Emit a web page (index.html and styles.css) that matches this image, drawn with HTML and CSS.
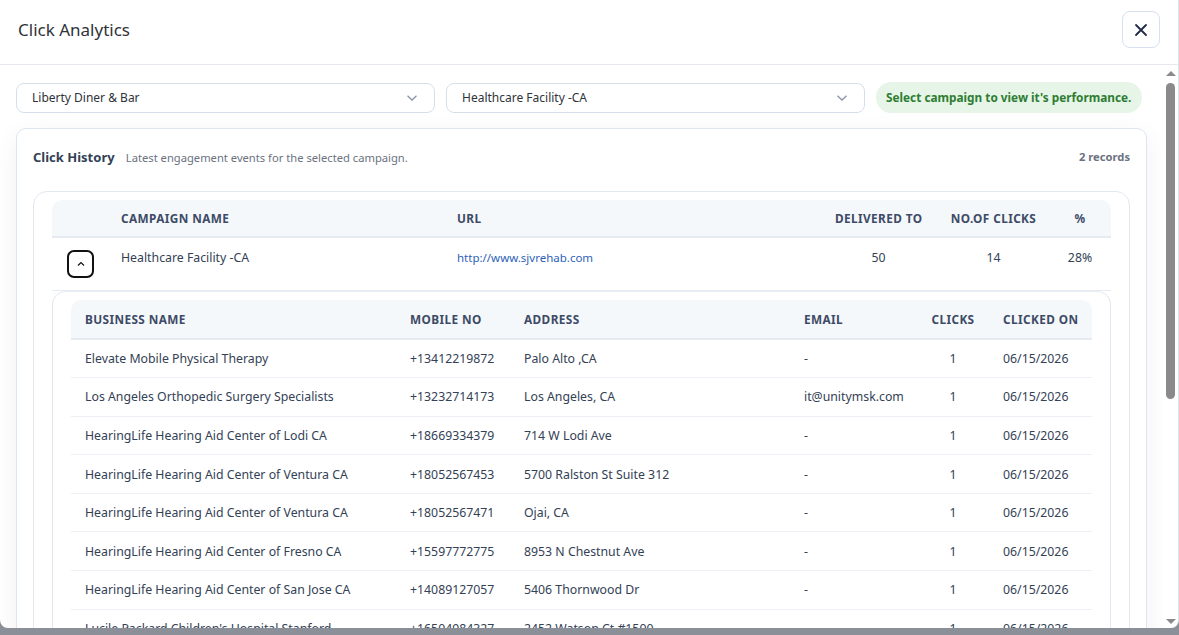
FILE: index.html
```html
<!DOCTYPE html>
<html lang="en">
<head>
    <meta charset="UTF-8">
    <meta name="viewport" content="width=device-width, initial-scale=1.0">
    <title>Click Analytics</title>
    <link rel="stylesheet" href="styles.css">
</head>
<body>
    <div class="modal">
        <div class="modal-header">
            <h2>Click Analytics</h2>
            <button type="button" class="close-btn" aria-label="Close">
                <svg width="14" height="14" viewBox="0 0 14 14"><path d="M2 2L12 12M12 2L2 12" stroke="#1f2a44" stroke-width="1.8" stroke-linecap="round"/></svg>
            </button>
        </div>
        <div class="modal-body">
            <div class="scroll-content">
                <div class="filters">
                    <div class="fake-select">
                        <span>Liberty Diner &amp; Bar</span>
                        <svg width="12" height="8" viewBox="0 0 12 8"><path d="M1.5 1.8L6 6L10.5 1.8" fill="none" stroke="#8a94a6" stroke-width="1.3"/></svg>
                    </div>
                    <div class="fake-select">
                        <span>Healthcare Facility -CA</span>
                        <svg width="12" height="8" viewBox="0 0 12 8"><path d="M1.5 1.8L6 6L10.5 1.8" fill="none" stroke="#8a94a6" stroke-width="1.3"/></svg>
                    </div>
                    <div class="hint-pill">Select campaign to view it's performance.</div>
                </div>

                <div class="history-card">
                    <div class="history-head">
                        <div class="history-title">
                            <strong>Click History</strong>
                            <span>Latest engagement events for the selected campaign.</span>
                        </div>
                        <div class="record-count">2 records</div>
                    </div>

                    <div class="table-wrap">
                        <table class="campaign-table">
                            <colgroup>
                                <col style="width:58px"><col style="width:336px"><col style="width:378px">
                                <col style="width:109px"><col style="width:121px"><col style="width:57px">
                            </colgroup>
                            <thead>
                                <tr>
                                    <th></th>
                                    <th>Campaign Name</th>
                                    <th>URL</th>
                                    <th class="center">Delivered To</th>
                                    <th class="center">No.of Clicks</th>
                                    <th class="center pct">%</th>
                                </tr>
                            </thead>
                            <tbody>
                                <tr class="campaign-row">
                                    <td><button type="button" class="toggle-btn"><svg width="10" height="6" viewBox="0 0 10 6"><path d="M2 4.5L5 1.6L8 4.5" fill="none" stroke="#111" stroke-width="1.2"/></svg></button></td>
                                    <td>Healthcare Facility -CA</td>
                                    <td><a href="#" class="url">http://www.sjvrehab.com</a></td>
                                    <td class="center">50</td>
                                    <td class="center">14</td>
                                    <td class="center pct">28%</td>
                                </tr>
                                <tr class="detail-row">
                                    <td colspan="6">
                                        <div class="table-wrap inner">
                                            <table class="clicks-table">
                                                <colgroup>
                                                    <col style="width:325px"><col style="width:114px"><col style="width:280px">
                                                    <col style="width:127px"><col style="width:72px"><col style="width:103px">
                                                </colgroup>
                                                <thead>
                                                    <tr>
                                                        <th>Business Name</th>
                                                        <th>Mobile No</th>
                                                        <th>Address</th>
                                                        <th>Email</th>
                                                        <th class="center">Clicks</th>
                                                        <th>Clicked On</th>
                                                    </tr>
                                                </thead>
                                                <tbody>
                                                    <tr><td>Elevate Mobile Physical Therapy</td><td>+13412219872</td><td>Palo Alto ,CA</td><td>-</td><td class="center">1</td><td>06/15/2026</td></tr>
                                                    <tr><td>Los Angeles Orthopedic Surgery Specialists</td><td>+13232714173</td><td>Los Angeles, CA</td><td>it@unitymsk.com</td><td class="center">1</td><td>06/15/2026</td></tr>
                                                    <tr><td>HearingLife Hearing Aid Center of Lodi CA</td><td>+18669334379</td><td>714 W Lodi Ave</td><td>-</td><td class="center">1</td><td>06/15/2026</td></tr>
                                                    <tr><td>HearingLife Hearing Aid Center of Ventura CA</td><td>+18052567453</td><td>5700 Ralston St Suite 312</td><td>-</td><td class="center">1</td><td>06/15/2026</td></tr>
                                                    <tr><td>HearingLife Hearing Aid Center of Ventura CA</td><td>+18052567471</td><td>Ojai, CA</td><td>-</td><td class="center">1</td><td>06/15/2026</td></tr>
                                                    <tr><td>HearingLife Hearing Aid Center of Fresno CA</td><td>+15597772775</td><td>8953 N Chestnut Ave</td><td>-</td><td class="center">1</td><td>06/15/2026</td></tr>
                                                    <tr><td>HearingLife Hearing Aid Center of San Jose CA</td><td>+14089127057</td><td>5406 Thornwood Dr</td><td>-</td><td class="center">1</td><td>06/15/2026</td></tr>
                                                    <tr><td>Lucile Packard Children's Hospital Stanford</td><td>+16504984327</td><td>2452 Watson Ct #1500</td><td>-</td><td class="center">1</td><td>06/15/2026</td></tr>
                                                    <tr><td>Valley Children's Healthcare</td><td>+15593532000</td><td>9300 Valley Children's Pl</td><td>-</td><td class="center">1</td><td>06/15/2026</td></tr>
                                                    <tr><td>San Joaquin Valley Rehabilitation Hospital</td><td>+15594366000</td><td>7173 N Sharon Ave</td><td>-</td><td class="center">1</td><td>06/15/2026</td></tr>
                                                    <tr><td>Sutter Health Physical Therapy</td><td>+19163863000</td><td>Sacramento, CA</td><td>-</td><td class="center">1</td><td>06/15/2026</td></tr>
                                                    <tr><td>Stanford Health Care Orthopedics</td><td>+16507235643</td><td>450 Broadway St</td><td>-</td><td class="center">1</td><td>06/15/2026</td></tr>
                                                    <tr><td>Kaiser Permanente Fresno Medical Center</td><td>+15594484500</td><td>7300 N Fresno St</td><td>-</td><td class="center">1</td><td>06/15/2026</td></tr>
                                                    <tr><td>Community Regional Medical Center</td><td>+15594594000</td><td>2823 Fresno St</td><td>-</td><td class="center">1</td><td>06/15/2026</td></tr>
                                                </tbody>
                                            </table>
                                        </div>
                                    </td>
                                </tr>
                                <tr class="campaign-row">
                                    <td><button type="button" class="toggle-btn"><svg width="10" height="6" viewBox="0 0 10 6"><path d="M2 1.6L5 4.5L8 1.6" fill="none" stroke="#111" stroke-width="1.2"/></svg></button></td>
                                    <td>Healthcare Facility -NV</td>
                                    <td><a href="#" class="url">http://www.sjvrehab.com</a></td>
                                    <td class="center">40</td>
                                    <td class="center">6</td>
                                    <td class="center pct">15%</td>
                                </tr>
                            </tbody>
                        </table>
                    </div>
                </div>
            </div>
            <div class="scrollbar">
                <span class="scroll-arrow up"></span>
                <span class="scroll-thumb"></span>
                <span class="scroll-arrow down"></span>
            </div>
        </div>
    </div>
</body>
</html>
```

FILE: styles.css
```css
body {
    margin: 0;
    background-color: #8b9098;
    font-family: "Noto Sans", "Open Sans", Arial, sans-serif;
    color: #334155;
}
.modal {
    background: #ffffff;
    height: 628px;
    border-radius: 0 0 8px 8px;
    border-right: 1px solid #dfe4ea;
    display: flex;
    flex-direction: column;
    overflow: hidden;
}
.modal-header {
    height: 65px;
    flex: none;
    display: flex;
    justify-content: space-between;
    align-items: flex-start;
    padding: 11px 18px 0 18px;
    box-sizing: border-box;
    border-bottom: 1px solid #e6eaf0;
}
.modal-header h2 {
    margin: 0;
    font-size: 17px;
    font-weight: 400;
    line-height: 38px;
    color: #2f3338;
}
.close-btn {
    width: 38px;
    height: 37px;
    background: #fff;
    border: 1px solid #d6e0ee;
    border-radius: 8px;
    display: flex;
    align-items: center;
    justify-content: center;
    padding: 0;
    cursor: pointer;
}
.modal-body {
    flex: 1;
    min-height: 0;
    display: flex;
}
.scroll-content {
    flex: 1;
    min-width: 0;
    overflow: hidden;
    padding: 17px 16px 20px 16px;
}
.scrollbar {
    flex: 0 0 15px;
    display: flex;
    flex-direction: column;
    align-items: center;
    padding: 5px 0 4px;
    box-sizing: border-box;
}
.scroll-arrow {
    width: 0;
    height: 0;
    border-left: 5px solid transparent;
    border-right: 5px solid transparent;
}
.scroll-arrow.up {
    border-bottom: 5px solid #8a8a8a;
    margin-top: 1px;
}
.scroll-arrow.down {
    border-top: 5px solid #8a8a8a;
    margin-top: auto;
}
.scroll-thumb {
    width: 9px;
    height: 316px;
    margin-top: 7px;
    background: #8a8a8a;
    border-radius: 5px;
}
.filters {
    display: flex;
    align-items: center;
    gap: 11px;
}
.fake-select {
    flex: 0 0 419px;
    height: 30px;
    box-sizing: border-box;
    border: 1px solid #d5dfeb;
    border-radius: 8px;
    display: flex;
    align-items: center;
    justify-content: space-between;
    padding: 0 16px 0 15px;
    font-size: 12px;
    color: #2f3338;
}
.hint-pill {
    background: #e6f5e8;
    color: #2e7d32;
    font-weight: 700;
    font-size: 11.8px;
    height: 31px;
    line-height: 31px;
    padding: 0 11px 0 10px;
    border-radius: 16px;
    white-space: nowrap;
}
.history-card {
    margin-top: 15px;
    border: 1px solid #dce5f0;
    border-radius: 10px;
    padding: 18px 16px 18px 16px;
    box-shadow: 0 8px 28px rgba(30, 41, 59, 0.06);
}
.history-head {
    display: flex;
    justify-content: space-between;
    align-items: center;
    height: 18px;
}
.history-title strong {
    font-size: 13px;
    color: #334155;
    margin-right: 7px;
}
.history-title span {
    font-size: 11.2px;
    color: #6b7280;
}
.record-count {
    font-size: 11.2px;
    font-weight: 700;
    color: #6b7280;
}
.table-wrap {
    margin-top: 26px;
    border: 1px solid #e2e8f0;
    border-radius: 14px;
    padding: 8px 18px;
}
.table-wrap.inner {
    margin-top: 0;
    border-top-color: #e8edf3;
}
table {
    width: 100%;
    border-collapse: collapse;
    table-layout: fixed;
}
th {
    background: #f5f8fb;
    text-align: left;
    text-transform: uppercase;
    font-size: 11.8px;
    font-weight: 700;
    color: #3d4b66;
    letter-spacing: 0.4px;
    white-space: nowrap;
}
td {
    font-size: 12.3px;
    color: #334155;
    white-space: nowrap;
    overflow: hidden;
}
.center {
    text-align: center;
}
.campaign-table th {
    height: 36px;
    padding: 0 11px;
    border-bottom: 2px solid #e6ebf1;
}
.campaign-table th:first-child {
    border-top-left-radius: 10px;
}
.campaign-table th:last-child {
    border-top-right-radius: 10px;
}
.campaign-table .pct {
    padding-right: 16px;
    padding-left: 11px;
}
.campaign-row td {
    height: 53px;
    padding: 1px 11px 14px 11px;
    border-bottom: 1px solid #e6ebf1;
    box-sizing: border-box;
}
.campaign-row td:first-child {
    padding: 0 0 0 15px;
}
.toggle-btn {
    width: 27px;
    height: 28px;
    margin-top: 1px;
    border: 2px solid #111;
    border-radius: 7px;
    background: #fff;
    padding: 0;
    display: flex;
    align-items: center;
    justify-content: center;
    cursor: pointer;
}
.url {
    color: #2d62b8;
    text-decoration: none;
    font-size: 11.5px;
}
.detail-row > td {
    padding: 0;
}
.clicks-table th {
    height: 38px;
    padding: 0 14px;
    border-bottom: 2px solid #e6ebf1;
}
.clicks-table th:first-child {
    border-top-left-radius: 10px;
}
.clicks-table th:last-child {
    border-top-right-radius: 10px;
}
.clicks-table td {
    height: 37.6px;
    padding: 0 14px;
    border-bottom: 1px solid #edf0f4;
}
.clicks-table tr:last-child td {
    border-bottom: none;
}
```
